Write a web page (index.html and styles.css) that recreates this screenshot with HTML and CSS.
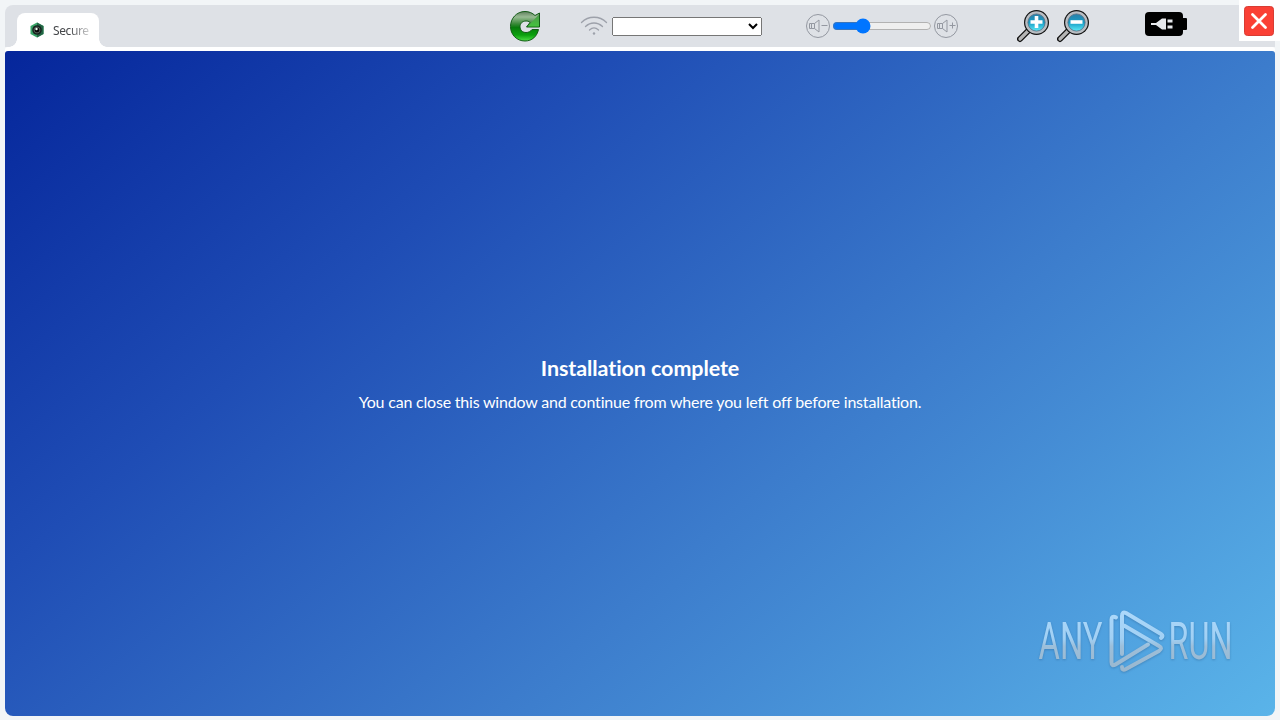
FILE: index.html
```html
<!DOCTYPE html>
<html lang="en">
<head>
  <meta charset="UTF-8">
  <title>Secure</title>
  <link rel="stylesheet" href="styles.css">
</head>
<body>
  <header class="toolbar">
    <div class="tab">
      <svg class="tab-icon" width="16" height="16" viewBox="0 0 16 16">
        <path d="M8 .5 14.5 4v8L8 15.5 1.500 12V4z" fill="#39a568"/>
        <path d="M8 .5 14.5 4v8L8 15.500z" fill="#236545"/>
        <circle cx="8" cy="8" r="4.800" fill="#17241f"/>
        <circle cx="8" cy="8" r="2.900" fill="#030504" stroke="#69736c" stroke-width=".8"/>
        <circle cx="7.500" cy="7" r="1.200" fill="#f4fff6"/>
      </svg>
      <span class="tab-title">Secure</span>
    </div>

    <button class="reload" title="Reload">
      <svg width="32" height="32" viewBox="0 0 32 32">
        <defs>
          <linearGradient id="green" gradientUnits="userSpaceOnUse" x1="0" y1="1" x2="0" y2="31">
            <stop offset="0" stop-color="#5c7a5a"/>
            <stop offset=".2" stop-color="#98bb93"/>
            <stop offset=".42" stop-color="#3d8a3c"/>
            <stop offset=".55" stop-color="#087b0c"/>
            <stop offset=".8" stop-color="#0ba00e"/>
            <stop offset="1" stop-color="#4de044"/>
          </linearGradient>
          <linearGradient id="arrow" x1="0" y1="0" x2="0" y2="1">
            <stop offset="0" stop-color="#4d9a4a"/>
            <stop offset="1" stop-color="#46c340"/>
          </linearGradient>
        </defs>
        <path d="M26 5.500 30.500 3v14H17.500l3.500-4.500c-1.300-1.300-2.500-1.500-4-1.500-3.500 0-6 2.500-6 5.800s2.500 5.700 6 5.700c2.500 0 4.500-1 6-3h6.500C28 26.500 23 31 16 31 7.500 31 1.500 24.500 1.500 16.500S7.500 1.500 16 1.500c4 0 7.500 1.500 10 4z" fill="url(#green)" stroke="#145c17"/>
        <path d="M18.500 16.500 30 4.500v12z" fill="url(#arrow)"/>
      </svg>
    </button>

    <div class="wifi">
      <svg width="28" height="22" viewBox="0 0 28 22" fill="none" stroke="#9da1aa" stroke-width="1.300" stroke-linecap="round">
        <path d="M1.500 7.500C8.500.5 19.500.5 26.500 7.500M5.500 11.500c5-4.700 12-4.700 17 0M9.500 15c2.700-2.500 6.300-2.500 9 0"/>
        <circle cx="14" cy="18.500" r="1.200" fill="#9da1aa" stroke="none"/>
      </svg>
      <select></select>
    </div>

    <div class="volume">
      <svg width="26" height="26" viewBox="0 0 26 26" fill="none" stroke="#9498a1">
        <circle cx="13" cy="13" r="11.500"/>
        <path d="M4.500 10.500h2v5h-2zM6.500 10.500h3v5h-3zM9.500 10.500 14 7v12l-4.500-3.500M16.500 12.500h6"/>
      </svg>
      <input type="range" min="0" max="100" value="27">
      <svg width="26" height="26" viewBox="0 0 26 26" fill="none" stroke="#9498a1">
        <circle cx="13" cy="13" r="11.500"/>
        <path d="M4.500 10.500h2v5h-2zM6.500 10.500h3v5h-3zM9.500 10.500 14 7v12l-4.500-3.500M16.500 12.500h6M19.500 9.500v6"/>
      </svg>
    </div>

    <div class="zoom">
      <svg width="34" height="34" viewBox="0 0 34 34">
        <defs>
          <linearGradient id="lens" x1="0" y1="0" x2="0" y2="1">
            <stop offset="0" stop-color="#2b7fa8"/>
            <stop offset=".5" stop-color="#179cc5"/>
            <stop offset="1" stop-color="#5ceaf7"/>
          </linearGradient>
        </defs>
        <path d="m3 30 9-9" stroke="#111" stroke-width="6" stroke-linecap="round"/>
        <path d="m3 30 9-9" stroke="#b5b5b5" stroke-width="3.200" stroke-linecap="round"/>
        <circle cx="19.500" cy="13.500" r="12.500" fill="#111"/>
        <circle cx="19.500" cy="13.500" r="11.300" fill="#b9bdc2"/>
        <circle cx="19.500" cy="13.500" r="8.600" fill="url(#lens)" stroke="#526b80" stroke-width=".8"/>
        <path d="M19.500 7v12M13.500 13h12" stroke="#fff" stroke-width="3.600"/>
      </svg>
      <svg width="34" height="34" viewBox="0 0 34 34">
        <path d="m3 30 9-9" stroke="#111" stroke-width="6" stroke-linecap="round"/>
        <path d="m3 30 9-9" stroke="#b5b5b5" stroke-width="3.200" stroke-linecap="round"/>
        <circle cx="19.500" cy="13.500" r="12.500" fill="#111"/>
        <circle cx="19.500" cy="13.500" r="11.300" fill="#b9bdc2"/>
        <circle cx="19.500" cy="13.500" r="8.600" fill="url(#lens)" stroke="#526b80" stroke-width=".8"/>
        <path d="M13.500 13h12" stroke="#fff" stroke-width="3.600"/>
      </svg>
    </div>

    <svg class="battery" width="43" height="24" viewBox="0 0 43 24">
      <rect width="38" height="24" rx="4"/>
      <rect x="36" y="6" width="6" height="12" rx="1"/>
      <path d="M6 11h5l6-4.500h4v11h-4L11 13H6zM22.500 7.500h5v3h-5zM22.500 13.500h5v3h-5z" fill="#e7e9ed"/>
    </svg>

    <button class="close" title="Close">
      <svg width="30" height="30" viewBox="0 0 30 30">
        <rect x=".5" y=".5" width="29" height="29" rx="3" fill="#fa4035" stroke="#d83c33"/>
        <path d="m8.500 8.500 13 13M21.500 8.500l-13 13" stroke="#fff" stroke-width="2.800" stroke-linecap="round"/>
      </svg>
    </button>
  </header>

  <main class="page">
    <h1>Installation complete</h1>
    <p>You can close this window and continue from where you left off before installation.</p>
  </main>

  <svg class="watermark" width="200" height="70" viewBox="0 0 200 70">
    <defs>
      <linearGradient id="mark" gradientUnits="userSpaceOnUse" x1="0" y1="4" x2="0" y2="66">
        <stop offset="0" stop-color="#add9fb"/>
        <stop offset=".48" stop-color="#a1d0f4"/>
        <stop offset=".6" stop-color="#9dbfda"/>
        <stop offset="1" stop-color="#9ab7ce"/>
      </linearGradient>
    </defs>
    <g fill="url(#mark)">
      <text x="2.500" y="54" textLength="64" lengthAdjust="spacingAndGlyphs">ANY</text>
      <text x="132.500" y="54" textLength="64" lengthAdjust="spacingAndGlyphs">RUN</text>
    </g>
    <g fill="none" stroke="url(#mark)" stroke-width="4" stroke-linejoin="round" stroke-linecap="round">
      <path d="M80 12.500c-3-2-4.500 0-4.500 2V57q0 5 4 2.500L112 39.500"/>
      <path d="M86 49V11q0-5 4-3l35 21q3 2 0 4M88 20.500l35 20.500q4 2 0 5L90 64q-4 2-4-2"/>
    </g>
  </svg>
</body>
</html>
```

FILE: styles.css
```css
* {
  box-sizing: border-box;
}
body {
  margin: 0;
  height: 720px;
  padding: 5px 5px 4px;
  display: flex;
  flex-direction: column;
  gap: 4px;
  overflow: hidden;
  background: #f2f5f7;
  font-family: Lato, sans-serif;
}
button {
  padding: 0;
  border: 0;
  background: none;
}
svg {
  display: block;
  flex: none;
}
.toolbar {
  display: flex;
  align-items: center;
  height: 42px;
  flex: none;
  background: #dee1e6;
  border-radius: 8px 0 0 0;
}
.tab {
  position: relative;
  display: flex;
  align-items: center;
  align-self: flex-end;
  gap: 8px;
  width: 82px;
  height: 34px;
  margin-left: 12px;
  padding-left: 12px;
  background: #fff;
  border-radius: 8px 8px 0 0;
}
/* flared feet of the tab */
.tab::before,
.tab::after {
  content: "";
  position: absolute;
  bottom: 0;
  width: 8px;
  height: 8px;
}
.tab::before {
  right: 100%;
  background: radial-gradient(circle at 0 0, transparent 7.500px, #fff 8px);
}
.tab::after {
  left: 100%;
  background: radial-gradient(circle at 100% 0, transparent 7.500px, #fff 8px);
}
.tab-title {
  white-space: nowrap;
  font: 12px "Noto Sans", sans-serif;
  letter-spacing: -0.4px;
  color: #45474a;
  -webkit-mask-image: linear-gradient(90deg, #000 45%, rgba(0, 0, 0, .25));
  mask-image: linear-gradient(90deg, #000 45%, rgba(0, 0, 0, .25));
}
.reload {
  margin-left: 410px;
}
.wifi {
  display: flex;
  align-items: center;
  gap: 4px;
  margin-left: 39px;
}
.wifi select {
  width: 150px;
  height: 19px;
  margin: 0;
}
.volume {
  display: flex;
  align-items: center;
  gap: 1px;
  margin-left: 43px;
}
.volume input {
  width: 100px;
  height: 16px;
  margin: 0;
}
.zoom {
  display: flex;
  gap: 6px;
  margin-left: 58px;
}
.battery {
  margin: -4px 0 0 54px;
}
.close {
  display: flex;
  align-items: center;
  width: 41px;
  height: 41px;
  margin: -11px -5px 0 auto;
  padding-left: 5px;
  background: #fff;
}
.page {
  flex: 1;
  display: flex;
  flex-direction: column;
  justify-content: center;
  align-items: center;
  color: #fff;
  border-radius: 3px 3px 8px 8px;
  box-shadow: 0 -4px 0 #fff;
  background: linear-gradient(140deg, #05269b, #1f4db5 30%, #3c7ccc 62%, #5ab4e9);
}
.page h1 {
  margin: 0 0 10px;
  font-size: 21.500px;
  line-height: 26px;
  letter-spacing: -0.08px;
}
.page p {
  margin: 0;
  font-size: 16px;
  line-height: 22px;
  letter-spacing: -0.2px;
}
.watermark {
  position: absolute;
  right: 44px;
  bottom: 45px;
  overflow: visible;
  filter: drop-shadow(0 1px 1px rgba(40, 90, 140, .4));
}
.watermark text {
  font: 400 52px Roboto, sans-serif;
}
```
